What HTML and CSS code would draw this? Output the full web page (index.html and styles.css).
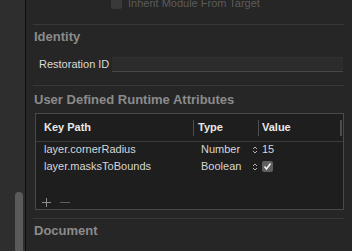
FILE: index.html
```html
<!DOCTYPE html>
<html lang="en">
<head>
    <meta charset="UTF-8">
    <title>Identity Inspector</title>
    <link rel="stylesheet" href="styles.css">
</head>
<body>
    <div class="window">
        <div class="gutter">
            <div class="gutter-thumb"></div>
        </div>

        <div class="inspector">
            <div class="inherit-row">
                <span class="inherit-box"></span>
                <span class="inherit-label">Inherit Module From Target</span>
            </div>

            <div class="separator first"></div>

            <h2 class="section-title identity">Identity</h2>
            <div class="field-row">
                <label class="field-label">Restoration ID</label>
                <div class="text-field"></div>
            </div>

            <div class="separator mid"></div>

            <h2 class="section-title runtime">User Defined Runtime Attributes</h2>
            <div class="attr-table">
                <div class="attr-head">
                    <div class="head-cell key">Key Path</div>
                    <div class="col-divider"></div>
                    <div class="head-cell type">Type</div>
                    <div class="col-divider"></div>
                    <div class="head-cell value">Value</div>
                    <div class="head-scroller"></div>
                </div>

                <div class="attr-row">
                    <div class="cell key">layer.cornerRadius</div>
                    <div class="cell type">
                        <span>Number</span>
                        <svg class="stepper" width="6" height="10" viewBox="0 0 6 10">
                            <path d="M1 4 L3 2 L5 4 M1 6 L3 8 L5 6" fill="none" stroke="#b4b4b4" stroke-width="1"/>
                        </svg>
                    </div>
                    <div class="cell value">15</div>
                </div>
                <div class="attr-row">
                    <div class="cell key">layer.masksToBounds</div>
                    <div class="cell type">
                        <span>Boolean</span>
                        <svg class="stepper" width="6" height="10" viewBox="0 0 6 10">
                            <path d="M1 4 L3 2 L5 4 M1 6 L3 8 L5 6" fill="none" stroke="#b4b4b4" stroke-width="1"/>
                        </svg>
                    </div>
                    <div class="cell value">
                        <span class="check-box">
                            <svg width="11" height="11" viewBox="0 0 11 11">
                                <path d="M2.5 5.5 L4.5 8 L8.5 2.5" fill="none" stroke="#f2f2f2" stroke-width="1.6"/>
                            </svg>
                        </span>
                    </div>
                </div>

                <div class="attr-actions">
                    <svg width="11" height="11" viewBox="0 0 11 11">
                        <path d="M5.5 1 V10 M1 5.5 H10" stroke="#8e8e8e" stroke-width="1"/>
                    </svg>
                    <svg width="12" height="11" viewBox="0 0 12 11">
                        <path d="M1 5.5 H11" stroke="#5e5e5e" stroke-width="1"/>
                    </svg>
                </div>
            </div>

            <div class="separator last"></div>

            <h2 class="section-title document">Document</h2>
        </div>
    </div>
</body>
</html>
```

FILE: styles.css
```css
* {
    margin: 0;
    padding: 0;
    box-sizing: border-box;
}

body {
    font-family: "Liberation Sans", Arial, sans-serif;
    font-size: 11px;
    background: #262626;
    color: #d6d6d6;
    overflow: hidden;
}

.window {
    display: flex;
    height: 251px;
    overflow: hidden;
}

/* Barra lateral izquierda con su scroll */
.gutter {
    width: 26px;
    flex-shrink: 0;
    background: #2e2e2e;
    border-right: 1px solid #0d0d0d;
    padding: 192px 0 0 15px;
    overflow: hidden;
}

.gutter-thumb {
    width: 8px;
    height: 80px;
    border-radius: 4px;
    background: #5a5a5a;
}

.inspector {
    flex: 1;
    padding: 0 8px 0 7px;
}

.inherit-row {
    display: flex;
    align-items: center;
    height: 12px;
    margin-top: -3px;
    line-height: 12px;
}

.inherit-box {
    width: 11px;
    height: 11px;
    margin-left: 78px;
    border-radius: 2px;
    background: #393939;
}

.inherit-label {
    margin-left: 6px;
    color: #5b5b5b;
}

.separator {
    height: 1px;
    background: #383838;
}

.separator.first {
    margin-top: 15px;
}

.separator.mid {
    margin-top: 13px;
}

.separator.last {
    margin-top: 8px;
}

.section-title {
    font-size: 13px;
    font-weight: 700;
    line-height: 16px;
    color: #8b8b8b;
    padding-left: 1px;
    margin-top: 4px;
}

.section-title.runtime {
    margin-top: 6px;
}

.field-row {
    display: flex;
    align-items: center;
    height: 15px;
    margin-top: 12px;
}

.field-label {
    width: 79px;
    padding-left: 6px;
    color: #dadada;
    line-height: 15px;
}

.text-field {
    flex: 1;
    height: 15px;
    margin-right: 1px;
    background: #2c2c2c;
    border-top: 1px solid #323232;
    border-bottom: 1px solid #474747;
}

/* Tabla de atributos */
.attr-table {
    margin: 5px 0 0 2px;
    height: 97px;
    border: 1px solid #4a4a4a;
    background: #1e1e1e;
    display: flex;
    flex-direction: column;
}

.attr-head {
    display: grid;
    grid-template-columns: 157px 1px 64px 1px 1fr 3px;
    align-items: center;
    height: 28px;
    border-bottom: 1px solid #3a3a3a;
}

.head-cell {
    font-weight: 700;
    color: #e8e8e8;
    line-height: 15px;
}

.head-cell.key {
    padding-left: 8px;
}

.head-cell.type {
    padding-left: 4px;
}

.head-cell.value {
    padding-left: 3px;
}

.col-divider {
    height: 16px;
    background: #4e4e4e;
}

.head-scroller {
    height: 16px;
    width: 2px;
    background: #4c4c4c;
    align-self: start;
    margin-top: 6px;
}

.attr-row {
    display: grid;
    grid-template-columns: 158px 65px 1fr;
    height: 17px;
    line-height: 15px;
}

.cell {
    display: flex;
    align-items: center;
    height: 15px;
}

.cell.key {
    padding-left: 8px;
}

.cell.type {
    justify-content: space-between;
    padding: 0 1px 0 7px;
}

.cell.value {
    padding-left: 3px;
}

.check-box {
    display: flex;
    width: 11px;
    height: 11px;
    border-radius: 2px;
    background: #5f5f5f;
}

.attr-actions {
    flex: 1;
    display: flex;
    align-items: flex-end;
    gap: 7px;
    padding: 0 0 1px 5px;
}
```
